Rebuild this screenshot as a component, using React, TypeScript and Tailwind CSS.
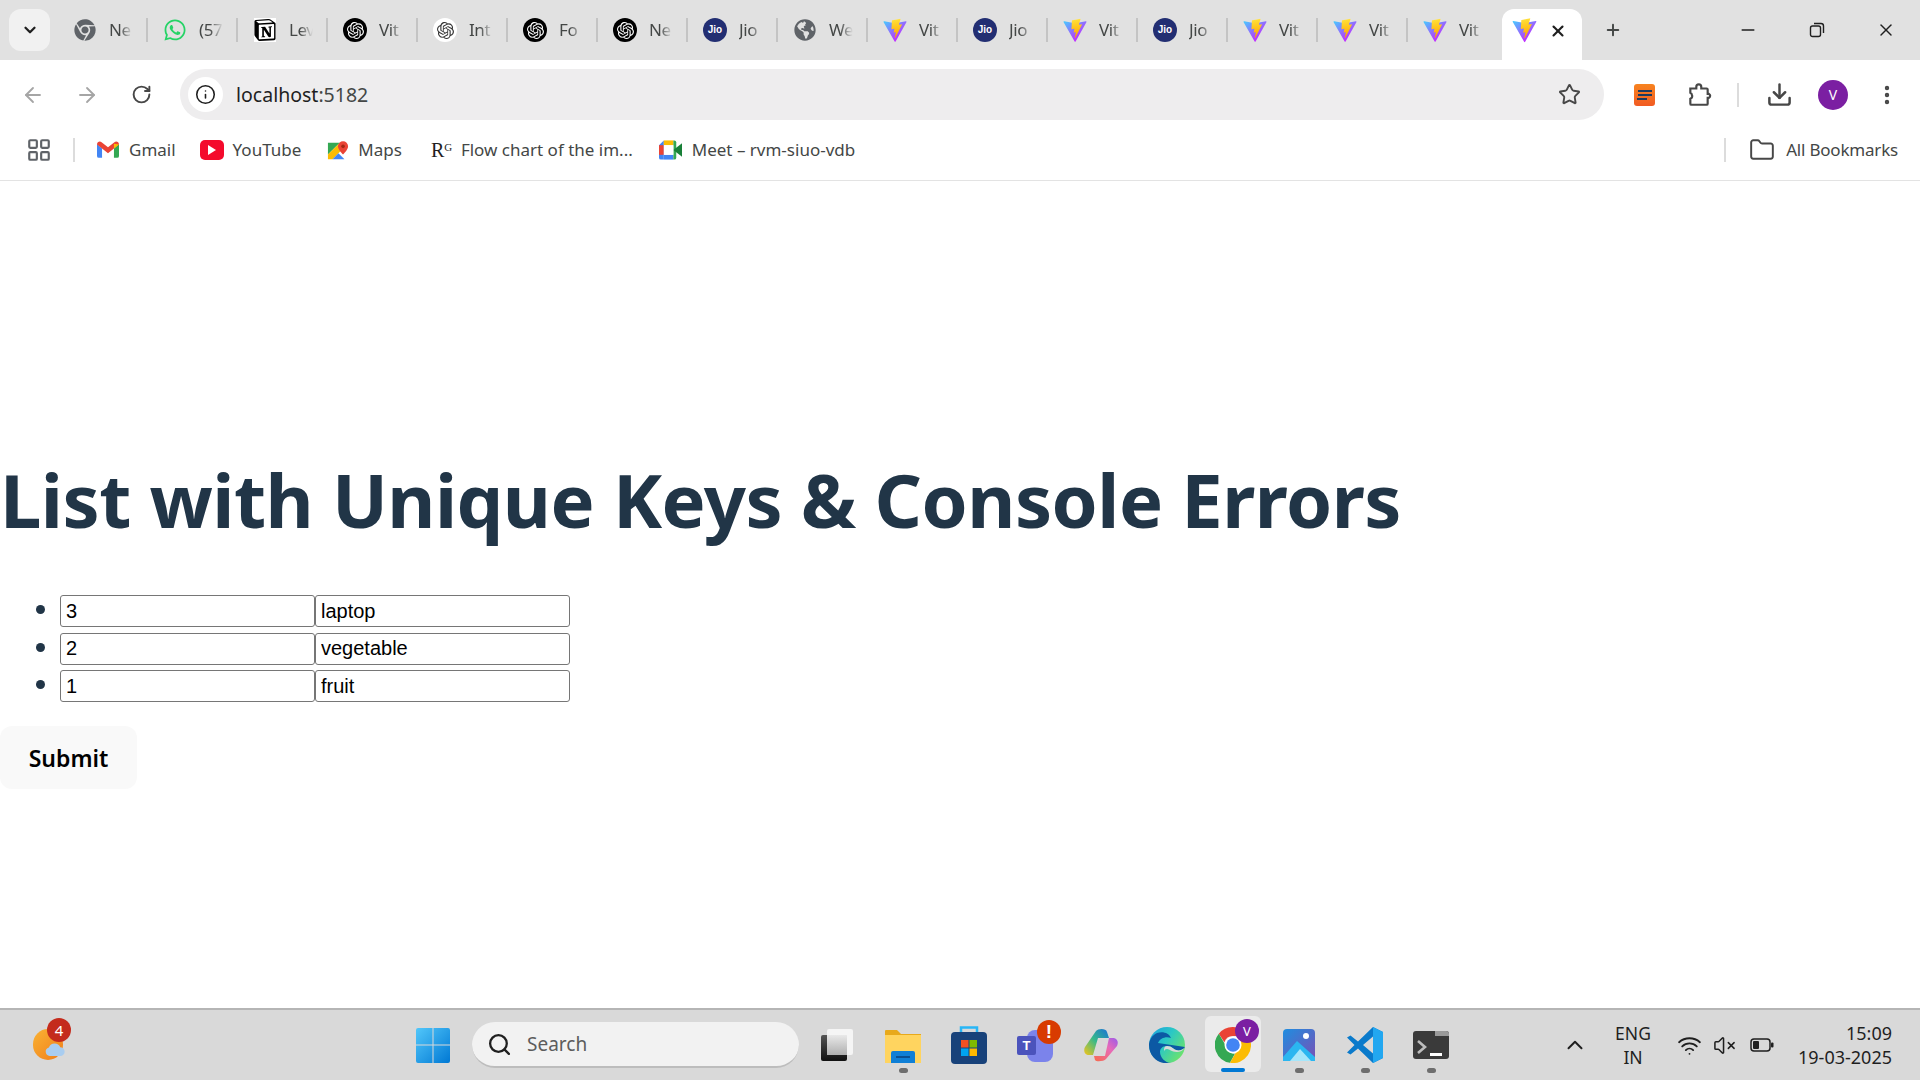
import {
  ArrowLeft,
  ArrowRight,
  ChevronDown,
  ChevronUp,
  Download,
  EllipsisVertical,
  Folder,
  Info,
  LayoutGrid,
  Minus,
  Plus,
  RotateCw,
  Search,
  Star,
  VolumeX,
  Wifi,
  X,
} from "lucide-react";
import type { ReactNode } from "react";
import { FaChrome, FaGlobeAmericas, FaWhatsapp } from "react-icons/fa";
import { SiNotion, SiOpenai } from "react-icons/si";

const ViteIcon = () => (
  <svg viewBox="0 0 410 404" className="w-[25px] h-[25px]">
    <defs>
      <linearGradient id="viteA" x1="6" y1="33" x2="235" y2="344" gradientUnits="userSpaceOnUse">
        <stop stopColor="#41D1FF" />
        <stop offset="1" stopColor="#BD34FE" />
      </linearGradient>
      <linearGradient id="viteB" x1="194" y1="8" x2="236" y2="293" gradientUnits="userSpaceOnUse">
        <stop stopColor="#FFEA83" />
        <stop offset="0.08" stopColor="#FFDD35" />
        <stop offset="1" stopColor="#FFA800" />
      </linearGradient>
    </defs>
    <path
      d="M399.6 59.5 215.9 388.2c-3.8 6.8-13.5 6.8-17.5.1L11 59.5C6.8 52.1 13.1 43.2 21.4 44.7l183.9 32.9c1.2.2 2.4.2 3.5 0l180-32.8c8.3-1.5 14.7 7.3 10.8 14.7Z"
      fill="url(#viteA)"
    />
    <path
      d="M292.9 1.6 156.9 28.2c-2.2.4-3.9 2.3-4 4.6l-8.4 141.3c-.2 3.3 2.9 5.9 6.1 5.2l37.9-8.8c3.5-.8 6.7 2.3 6 5.8l-11.3 55.2c-.8 3.7 2.7 6.9 6.3 5.8l23.4-7.1c3.6-1.1 7.1 2.1 6.3 5.8l-17.9 86.6c-1.1 5.4 6.1 8.4 9.1 3.7l2-3.1 110.9-221.3c1.9-3.7-1.3-7.9-5.4-7.1l-39 7.5c-3.7.7-6.8-2.7-5.7-6.3l25.4-88.2c1.1-3.6-2.1-7-5.8-6.3Z"
      fill="url(#viteB)"
    />
  </svg>
);

const JioIcon = () => (
  <span className="w-[24px] h-[24px] rounded-full bg-[#222e72] flex items-center justify-center text-white text-[10px] font-bold leading-none font-['Liberation_Sans',sans-serif]">
    Jio
  </span>
);

const OpenAiIcon = ({ light }: { light?: boolean }) => (
  <span
    className={`w-[24px] h-[24px] rounded-full flex items-center justify-center ${
      light ? "bg-white text-[#333333]" : "bg-black text-white"
    }`}
  >
    <SiOpenai size={17} />
  </span>
);

const tabs: { icon: ReactNode; label: string }[] = [
  { icon: <FaChrome size={22} color="#5f6368" />, label: "Ne" },
  { icon: <FaWhatsapp size={24} color="#25d366" />, label: "(57" },
  {
    icon: (
      <span className="w-[22px] h-[24px] bg-white flex items-center justify-center">
        <SiNotion size={22} color="#000000" />
      </span>
    ),
    label: "Lev",
  },
  { icon: <OpenAiIcon />, label: "Vit" },
  { icon: <OpenAiIcon light />, label: "Int" },
  { icon: <OpenAiIcon />, label: "Fo" },
  { icon: <OpenAiIcon />, label: "Ne" },
  { icon: <JioIcon />, label: "Jio" },
  { icon: <FaGlobeAmericas size={22} color="#5f6368" />, label: "We" },
  { icon: <ViteIcon />, label: "Vit" },
  { icon: <JioIcon />, label: "Jio" },
  { icon: <ViteIcon />, label: "Vit" },
  { icon: <JioIcon />, label: "Jio" },
  { icon: <ViteIcon />, label: "Vit" },
  { icon: <ViteIcon />, label: "Vit" },
  { icon: <ViteIcon />, label: "Vit" },
];

const RestoreIcon = () => (
  <svg viewBox="0 0 16 16" className="w-[16px] h-[16px]" fill="none" stroke="#1f1f1f" strokeWidth="1.4">
    <rect x="1.5" y="4" width="10" height="10.5" rx="2" />
    <path d="M5 1.5h7a2.5 2.5 0 0 1 2.5 2.5v7" />
  </svg>
);

const TabStrip = () => (
  <div className="h-[60px] flex bg-[#e1e1e1] shrink-0">
    <div className="mt-[9px] ml-[9px] mr-[7px] w-[41px] h-[42px] rounded-[12px] bg-[#f1f1f1] flex items-center justify-center">
      <ChevronDown size={18} strokeWidth={3} color="#1f1f1f" />
    </div>
    {tabs.map((tab, i) => (
      <div key={i} className="w-[90px] h-[60px] flex items-center pl-[16px] relative">
        <span className="w-[24px] flex justify-center shrink-0">{tab.icon}</span>
        <span className="ml-[12px] w-[24px] overflow-hidden whitespace-nowrap text-[17px] text-[#444746] font-['Noto_Sans',sans-serif] tracking-[-0.4px] [mask-image:linear-gradient(to_right,black_45%,transparent)]">
          {tab.label}
        </span>
        {i < tabs.length - 1 && (
          <span className="absolute right-[-1px] top-[18px] h-[24px] w-[2px] bg-[#c4c4c4]" />
        )}
      </div>
    ))}
    <div className="ml-[5px] mt-[9px] w-[80px] h-[51px] bg-white rounded-t-[12px] flex items-center pl-[10px] pb-[8px]">
      <ViteIcon />
      <X size={18} strokeWidth={2.8} color="#1f1f1f" className="ml-[12px]" />
    </div>
    <div className="ml-[22px] w-[18px] flex items-center justify-center">
      <Plus size={22} strokeWidth={2.6} color="#444746" />
    </div>
    <div className="ml-[116px] w-[20px] flex items-center justify-center">
      <Minus size={20} strokeWidth={1.8} color="#1f1f1f" />
    </div>
    <div className="ml-[49px] w-[20px] flex items-center justify-center">
      <RestoreIcon />
    </div>
    <div className="ml-[49px] w-[20px] flex items-center justify-center">
      <X size={26} strokeWidth={1.7} color="#1f1f1f" />
    </div>
  </div>
);

const Toolbar = () => (
  <div className="h-[60px] bg-white flex items-start pt-[9px] shrink-0">
    <div className="w-[180px] h-[51px] flex items-center shrink-0">
      <ArrowLeft size={24} strokeWidth={1.8} color="#a5a5a5" className="ml-[21px]" />
      <ArrowRight size={24} strokeWidth={1.8} color="#a5a5a5" className="ml-[30px]" />
      <RotateCw size={21} strokeWidth={2.2} color="#474747" className="ml-[32px]" />
    </div>
    <div className="w-[1424px] h-[51px] rounded-full bg-[#eeedee] flex items-center pl-[8px] pr-[23px] shrink-0">
      <span className="w-[35px] h-[35px] rounded-full bg-white flex items-center justify-center">
        <Info size={21} strokeWidth={1.8} color="#1f1f1f" />
      </span>
      <span className="ml-[13px] text-[19.5px] text-[#1f1f1f] font-['Noto_Sans',sans-serif]">
        localhost<span className="text-[#444746]">:5182</span>
      </span>
      <Star size={23} strokeWidth={2} color="#474747" className="ml-auto" />
    </div>
    <div className="flex-1 h-[51px] flex items-center">
      <span className="ml-[30px] w-[21px] h-[22px] rounded-[3px] bg-gradient-to-b from-[#f7831f] to-[#f15a22] flex flex-col items-center justify-center gap-[2px]">
        <span className="w-[14px] h-[2px] bg-[#1f3a5f]" />
        <span className="w-[14px] h-[2px] bg-[#1f3a5f]" />
        <span className="w-[10px] h-[2px] bg-[#1f3a5f] self-start ml-[3px]" />
      </span>
      <svg viewBox="0 0 24 24" className="ml-[31px] w-[26px] h-[26px]" fill="none" stroke="#474747" strokeWidth="2">
        <path d="M4 6h5.5V4.5a2.3 2.3 0 0 1 4.6 0V6H19a1 1 0 0 1 1 1v4h1.2a2 2 0 0 1 0 3.6H20V20a1 1 0 0 1-1 1H5a1 1 0 0 1-1-1v-4.500a2.500 2.500 0 0 0 1.500-3.500A2.500 2.500 0 0 0 4 10Z" />
      </svg>
      <span className="ml-[25px] w-[2px] h-[24px] bg-[#dcdcdc]" />
      <Download size={27} strokeWidth={2.2} color="#474747" className="ml-[27px]" />
      <span className="ml-[25px] w-[30px] h-[30px] rounded-full bg-[#7b1fa2] flex items-center justify-center text-white text-[14px] font-['Noto_Sans',sans-serif]">
        V
      </span>
      <EllipsisVertical size={24} strokeWidth={2.4} color="#474747" className="ml-[27px]" />
    </div>
  </div>
);

const GmailIcon = () => (
  <svg viewBox="0 0 24 18" className="w-[22px] h-[17px]">
    <path d="M0 3v13a2 2 0 0 0 2 2h3.500V8Z" fill="#4285f4" />
    <path d="M24 3v13a2 2 0 0 1-2 2h-3.500V8Z" fill="#34a853" />
    <path d="M0 3.500C0 .8 3 -.8 5 1l7 5.500L19 1c2-1.800 5-.2 5 2.500L18.500 8 12 13 5.500 8Z" fill="#ea4335" />
    <path d="M18.500 2.800 24 3.500 18.500 8Z" fill="#fbbc04" />
  </svg>
);

const YouTubeIcon = () => (
  <span className="w-[24px] h-[20px] rounded-[5px] bg-[#f40a2c] flex items-center justify-center">
    <span className="w-0 h-0 border-y-[5px] border-y-transparent border-l-[8px] border-l-white" />
  </span>
);

const MapsIcon = () => (
  <svg viewBox="0 0 24 24" className="w-[22px] h-[24px]">
    <path d="M1 4 14 4 1 17Z" fill="#34a853" />
    <path d="M1 17 14 4 19 9 6 22H1Z" fill="#fbbc04" />
    <path d="M6 22 12.500 15.500 19 22Z" fill="#4285f4" />
    <path d="M12 8a5.500 5.500 0 0 1 11 0c0 4-5.500 9-5.500 9S12 12 12 8Z" fill="#ea4335" />
    <circle cx="17.500" cy="8" r="2" fill="#a52714" />
  </svg>
);

const MeetIcon = () => (
  <svg viewBox="0 0 24 20" className="w-[23px] h-[20px]">
    <path d="M0 5 5 0v20H2a2 2 0 0 1-2-2Z" fill="#4285f4" />
    <path d="M5 0h10v5H5Z" fill="#fbbc04" />
    <path d="M0 5h5v10H0Z" fill="#ea4335" />
    <path d="M5 15h10v5H5Z" fill="#4285f4" />
    <path d="M15 0h1a2 2 0 0 1 2 2v16a2 2 0 0 1-2 2h-1Z" fill="#34a853" />
    <path d="M15 10 24 3v14Z" fill="#188038" />
    <rect x="5" y="5" width="10" height="10" fill="#ffffff" />
  </svg>
);

const bookmarkText = "text-[17px] text-[#444746] whitespace-nowrap font-['Noto_Sans',sans-serif]";

const BookmarksBar = () => (
  <div className="h-[61px] bg-white border-b border-[#e3e3e3] flex items-center pb-[1px] shrink-0">
    <LayoutGrid size={26} strokeWidth={2} color="#5f6368" className="ml-[26px]" />
    <span className="ml-[21px] w-[2px] h-[24px] bg-[#dcdcdc]" />
    <span className="ml-[22px]">
      <GmailIcon />
    </span>
    <span className={`ml-[10px] ${bookmarkText}`}>Gmail</span>
    <span className="ml-[24px]">
      <YouTubeIcon />
    </span>
    <span className={`ml-[9px] ${bookmarkText}`}>YouTube</span>
    <span className="ml-[26px]">
      <MapsIcon />
    </span>
    <span className={`ml-[9px] ${bookmarkText}`}>Maps</span>
    <span className="ml-[29px] w-[18px] text-[20px] text-[#1f1f1f] leading-none font-['Liberation_Serif',serif]">
      R<sup className="text-[11px]">G</sup>
    </span>
    <span className={`ml-[12px] ${bookmarkText}`}>Flow chart of the im...</span>
    <span className="ml-[26px]">
      <MeetIcon />
    </span>
    <span className={`ml-[10px] ${bookmarkText}`}>Meet – rvm-siuo-vdb</span>
    <span className="ml-auto w-[2px] h-[24px] bg-[#dcdcdc]" />
    <Folder size={26} strokeWidth={1.8} color="#474747" className="ml-[23px]" />
    <span className={`ml-[11px] mr-[22px] tracking-[-0.2px] ${bookmarkText}`}>All Bookmarks</span>
  </div>
);

const items = [
  { id: "3", name: "laptop" },
  { id: "2", name: "vegetable" },
  { id: "1", name: "fruit" },
];

const inputClass =
  "w-[255px] h-[32px] border border-[#767676] rounded-[3px] px-[5px] text-[20px] text-black bg-white font-['Liberation_Sans',sans-serif] outline-none";

const Page = () => (
  <main className="flex-1 bg-white text-[#213547] font-['Noto_Sans',sans-serif] pt-[269px]">
    <h1 className="text-[74px] font-bold leading-[100px] tracking-[-0.5px] whitespace-nowrap">
      List with Unique Keys &amp; Console Errors
    </h1>
    <ul className="mt-[45px] pl-[60px] flex flex-col gap-[5.5px]">
      {items.map((item) => (
        <li key={item.id} className="flex relative">
          <span className="absolute left-[-24px] top-[10px] w-[9px] h-[9px] rounded-full bg-[#213547]" />
          <input readOnly value={item.id} className={inputClass} />
          <input readOnly value={item.name} className={inputClass} />
        </li>
      ))}
    </ul>
    <button className="mt-[24px] block w-[137px] h-[63px] pt-[2px] rounded-[12px] bg-[#f9f9f9] text-[23px] font-semibold text-black">
      Submit
    </button>
  </main>
);

const WindowsLogo = () => (
  <svg viewBox="0 0 34 35" className="w-[34px] h-[35px]">
    <defs>
      <linearGradient id="win" x1="0" y1="0" x2="1" y2="1">
        <stop stopColor="#52c7fa" />
        <stop offset="1" stopColor="#0078d4" />
      </linearGradient>
    </defs>
    <path d="M0 2a2 2 0 0 1 2-2h14.500v16.500H0ZM17.500 0H32a2 2 0 0 1 2 2v14.500H17.500ZM0 17.500h16.500V35H2a2 2 0 0 1-2-2ZM17.500 17.500H34V33a2 2 0 0 1-2 2H17.500Z" fill="url(#win)" />
  </svg>
);

const TaskSlot = ({ children, dot, active }: { children: ReactNode; dot?: boolean; active?: boolean }) => (
  <div className="w-[66px] h-[70px] flex items-center justify-center relative">
    {active && (
      <>
        <span className="absolute left-[5px] top-[6px] w-[56px] h-[56px] rounded-[6px] bg-[#ebebeb]" />
        <span className="absolute left-[21px] top-[58px] w-[24px] h-[4px] rounded-full bg-[#0078d4]" />
      </>
    )}
    <span className="relative flex">{children}</span>
    {dot && <span className="absolute left-[29px] top-[58px] w-[9px] h-[5px] rounded-full bg-[#6e6e6e]" />}
  </div>
);

const FilesIcon = () => (
  <svg viewBox="0 0 36 36" className="w-[36px] h-[36px]">
    <path d="M0 4a1 1 0 0 1 1-1h11l4 4h20v29H0Z" fill="#e8a91b" />
    <path d="M0 8h36v28H0Z" fill="#ffd45f" />
    <path d="M6 26a2 2 0 0 1 2-2h20a2 2 0 0 1 2 2v10H6Z" fill="#0f7fd6" />
    <rect x="11" y="29" width="14" height="2" fill="#0a4f91" />
  </svg>
);

const StoreIcon = () => (
  <svg viewBox="0 0 36 38" className="w-[36px] h-[38px]">
    <path d="M10 6V1.500h16V6" fill="none" stroke="#29b6f6" strokeWidth="2.500" />
    <rect x="0" y="6" width="36" height="32" rx="4" fill="#18427a" />
    <rect x="10" y="14" width="7.500" height="7.500" fill="#f25022" />
    <rect x="18.500" y="14" width="7.500" height="7.500" fill="#7fba00" />
    <rect x="10" y="22.500" width="7.500" height="7.500" fill="#00a4ef" />
    <rect x="18.500" y="22.500" width="7.500" height="7.500" fill="#ffb900" />
  </svg>
);

const TeamsIcon = () => (
  <span className="relative w-[36px] h-[34px] flex">
    <span className="absolute left-[10px] top-[2px] w-[26px] h-[32px] rounded-[8px] bg-[#7b83eb]" />
    <span className="absolute left-0 top-[8px] w-[19px] h-[19px] rounded-[2px] bg-[#4b53bc] text-white text-[13px] font-bold leading-[19px] text-center font-['Liberation_Sans',sans-serif]">
      T
    </span>
    <span className="absolute left-[20px] top-[-8px] w-[24px] h-[24px] rounded-full bg-[#d83b01] text-white text-[19px] font-bold leading-[24px] text-center font-['Liberation_Sans',sans-serif]">
      !
    </span>
  </span>
);

const CopilotIcon = () => (
  <svg viewBox="0 0 34 34" className="w-[34px] h-[34px]">
    <defs>
      <linearGradient id="copA" x1="0" y1="1" x2="1" y2="0">
        <stop stopColor="#f5c518" />
        <stop offset="0.5" stopColor="#35b98a" />
        <stop offset="1" stopColor="#1b70d8" />
      </linearGradient>
      <linearGradient id="copB" x1="0" y1="1" x2="1" y2="0">
        <stop stopColor="#f76b4a" />
        <stop offset="0.6" stopColor="#e86bb8" />
        <stop offset="1" stopColor="#9a5bea" />
      </linearGradient>
    </defs>
    <path d="M12 3c2-2.500 10-3 11 1l2 6H14L9 27H5C1 27-1 23 1 19Z" fill="url(#copA)" />
    <path d="M22 31c-2 2.500-10 3-11 1l-1-4h11l4-18h4c4 0 6 4 4 8Z" fill="url(#copB)" />
  </svg>
);

const EdgeIcon = () => (
  <svg viewBox="0 0 36 36" className="w-[36px] h-[36px]">
    <defs>
      <linearGradient id="edgeA" x1="0" y1="0" x2="1" y2="0.700">
        <stop stopColor="#1b9de2" />
        <stop offset="0.5" stopColor="#2bc8c4" />
        <stop offset="1" stopColor="#6ee36b" />
      </linearGradient>
    </defs>
    <circle cx="18" cy="18" r="18" fill="url(#edgeA)" />
    <path d="M36 20c-1 3-6 4-9 3-3-1-4-4-9-4-5 0-7 3-7 6 0 5 5 11 11 11-12 2-22-6-22-18C0 14 3 8 8 6c6-2 12 0 14 5-5-2-11 0-13 5" fill="#0c59a4" />
    <path d="M18 19c5 0 6 3 9 4 3 1 7 0 9-3 0 0-2 5-8 5s-7-3-10-3-3 3-3 3c0-3 0-6 3-6Z" fill="#d9d9d9" />
  </svg>
);

const ChromeIcon = () => (
  <svg viewBox="0 0 36 36" className="w-[36px] h-[36px]">
    <path d="M18 0a18 18 0 0 1 15.600 9H18a9 9 0 0 0-8.600 6.300L3.800 6.700A18 18 0 0 1 18 0Z" fill="#ea4335" />
    <path d="M3.800 6.700 11 19a9 9 0 0 0 8.900 7.800L15 35.800A18 18 0 0 1 3.800 6.700Z" fill="#34a853" />
    <path d="M33.600 9A18 18 0 0 1 15 35.800l7.500-13a9 9 0 0 0 .5-13.800Z" fill="#fbbc04" />
    <circle cx="18" cy="18" r="8.500" fill="#ffffff" />
    <circle cx="18" cy="18" r="6.800" fill="#4285f4" />
  </svg>
);

const PhotosIcon = () => (
  <svg viewBox="0 0 32 32" className="w-[32px] h-[32px]">
    <defs>
      <linearGradient id="ph" x1="0" y1="0" x2="1" y2="1">
        <stop stopColor="#1e8ee0" />
        <stop offset="1" stopColor="#7a4fb5" />
      </linearGradient>
    </defs>
    <rect width="32" height="32" rx="4" fill="url(#ph)" />
    <circle cx="23" cy="7" r="3" fill="#ffffff" />
    <path d="M0 28 14 12 32 28v4H0Z" fill="#2bb6f0" />
    <path d="M7 32 17 20 28 32Z" fill="#a6e6fa" />
  </svg>
);

const VsCodeIcon = () => (
  <svg viewBox="0 0 36 36" className="w-[36px] h-[36px]">
    <path d="M26 0 36 5v26l-10 5L11 21.500 3.500 27.500 0 25.500 7.500 18 0 10.500 3.500 8.500 11 14.500ZM26 9.500 16 18l10 8.500Z" fill="#0a7acb" />
    <path d="M26 0 36 5v26l-10 5Z" fill="#22a7f0" />
  </svg>
);

const TerminalIcon = () => (
  <span className="relative w-[36px] h-[28px] rounded-[3px] bg-[#3a3a3a] flex items-center">
    <span className="absolute right-0 top-0 w-[14px] h-[5px] bg-[#9a9a9a] rounded-tr-[3px]" />
    <svg viewBox="0 0 36 28" className="w-[36px] h-[28px]" fill="none">
      <path d="M5 10l7 6-7 6" stroke="#bdbdbd" strokeWidth="2.600" />
      <rect x="17" y="22" width="12" height="3" fill="#ffffff" />
    </svg>
  </span>
);

const Taskbar = () => (
  <footer className="h-[72px] bg-[#d9d9d9] border-t-2 border-[#b5b5b5] flex items-center shrink-0 relative font-['Noto_Sans',sans-serif] text-[#1f1f1f]">
    <span className="relative ml-[33px] w-[32px] h-[32px] flex">
      <span className="w-[30px] h-[31px] rounded-full bg-gradient-to-br from-[#f9b233] to-[#ef7d1a]" />
      <svg viewBox="0 0 24 16" className="absolute left-[11px] top-[13px] w-[22px] h-[14px]">
        <path d="M6 16a5 5 0 0 1-1-9.800A7 7 0 0 1 18 6a5 5 0 0 1 0 10Z" fill="#a9cdf0" />
      </svg>
      <span className="absolute left-[14px] top-[-11px] w-[24px] h-[24px] rounded-full bg-[#c42b1c] text-white text-[15px] leading-[24px] text-center">
        4
      </span>
    </span>
    <span className="ml-[351px] flex">
      <WindowsLogo />
    </span>
    <div className="ml-[22px] w-[327px] h-[46px] rounded-full bg-[#f2f2f2] border-b-2 border-[#bdbdbd] flex items-center pl-[15px] shrink-0">
      <Search size={25} strokeWidth={2.2} color="#1f1f1f" />
      <span className="ml-[15px] text-[19px] text-[#5c5c5c]">Search</span>
    </div>
    <div className="ml-[5px] flex items-center">
      <TaskSlot>
        <span className="relative w-[32px] h-[32px] flex">
          <span className="absolute left-[6px] top-0 w-[26px] h-[26px] rounded-[2px] bg-[#f5f5f5]" />
          <span className="absolute left-0 top-[6px] w-[26px] h-[26px] rounded-[2px] bg-gradient-to-b from-[#555555] to-[#111111]" />
          <span className="absolute left-[6px] top-[6px] w-[20px] h-[20px] bg-gradient-to-b from-[#e9e9e9] to-[#b0b0b0]" />
        </span>
      </TaskSlot>
      <TaskSlot dot>
        <FilesIcon />
      </TaskSlot>
      <TaskSlot>
        <StoreIcon />
      </TaskSlot>
      <TaskSlot>
        <TeamsIcon />
      </TaskSlot>
      <TaskSlot>
        <CopilotIcon />
      </TaskSlot>
      <TaskSlot>
        <EdgeIcon />
      </TaskSlot>
      <TaskSlot active>
        <span className="relative flex">
          <ChromeIcon />
          <span className="absolute left-[20px] top-[-8px] w-[24px] h-[24px] rounded-full bg-[#7b1fa2] text-white text-[13px] leading-[24px] text-center">
            V
          </span>
        </span>
      </TaskSlot>
      <TaskSlot dot>
        <PhotosIcon />
      </TaskSlot>
      <TaskSlot dot>
        <VsCodeIcon />
      </TaskSlot>
      <TaskSlot dot>
        <TerminalIcon />
      </TaskSlot>
    </div>
    <ChevronUp size={26} strokeWidth={1.8} color="#1f1f1f" className="ml-[98px]" />
    <div className="ml-[17px] w-[56px] flex flex-col items-center text-[17.5px] leading-[24px]">
      <span>ENG</span>
      <span>IN</span>
    </div>
    <Wifi size={25} strokeWidth={1.8} color="#1f1f1f" className="ml-[16px]" />
    <VolumeX size={23} strokeWidth={1.6} color="#1f1f1f" className="ml-[11px]" />
    <svg viewBox="0 0 24 14" className="ml-[14px] w-[24px] h-[14px]" fill="none">
      <rect x="1" y="1" width="19" height="12" rx="3" stroke="#1f1f1f" strokeWidth="1.500" />
      <rect x="3" y="3" width="6" height="8" rx="1" fill="#1f1f1f" />
      <rect x="21" y="4.500" width="2.500" height="5" rx="1" fill="#1f1f1f" />
    </svg>
    <div className="ml-auto mr-[28px] flex flex-col items-end text-[18px] leading-[24px] whitespace-nowrap">
      <span>15:09</span>
      <span>19-03-2025</span>
    </div>
  </footer>
);

export default function App() {
  return (
    <div className="w-[1920px] h-[1080px] flex flex-col overflow-hidden bg-white">
      <TabStrip />
      <Toolbar />
      <BookmarksBar />
      <Page />
      <Taskbar />
    </div>
  );
}
